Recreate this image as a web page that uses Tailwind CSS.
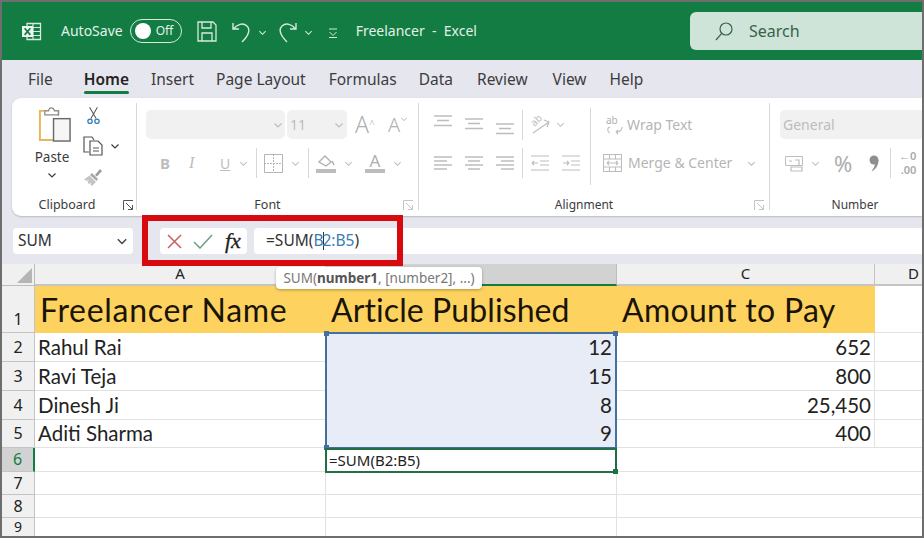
<!DOCTYPE html>
<html lang="en">
<head>
<meta charset="UTF-8">
<title>Freelancer - Excel</title>
<script src="https://cdn.jsdelivr.net/npm/@tailwindcss/browser@4"></script>
</head>
<body class="bg-white">
<svg class="hidden">
  <symbol id="chev" viewBox="0 0 10 10"><path d="M1.5 3.5 5 7l3.5-3.5" fill="none" stroke="currentColor" stroke-width="1.2"/></symbol>
  <symbol id="lines-l" viewBox="0 0 18 16"><path d="M0 2h18M0 6h13M0 10h18M0 14h13" stroke="currentColor" stroke-width="1.5"/></symbol>
  <symbol id="lines-c" viewBox="0 0 18 16"><path d="M0 2h18M3 6h12M0 10h18M3 14h12" stroke="currentColor" stroke-width="1.5"/></symbol>
  <symbol id="lines-r" viewBox="0 0 18 16"><path d="M0 2h18M5 6h13M0 10h18M5 14h13" stroke="currentColor" stroke-width="1.5"/></symbol>
  <symbol id="valign" viewBox="0 0 18 12"><path d="M0 1h18M3 5.500h12M0 10.500h18" stroke="currentColor" stroke-width="1.300"/></symbol>
  <symbol id="launcher" viewBox="0 0 11 11"><path d="M.5 10V.5H10M3 3l6.500 6.500M9.500 5v4.500H5" fill="none" stroke="currentColor" stroke-width="1"/></symbol>
</svg>

<div class="relative w-[924px] h-[538px] overflow-hidden flex flex-col border-2 border-[#6e6e6e] bg-[#e6e6ef] font-['Noto_Sans','Open_Sans',sans-serif]">

  <!-- title bar -->
  <header class="h-[58px] shrink-0 bg-[#127c43] flex items-start text-[#e4f1e9] text-[14px]">
    <svg class="ml-[19px] mt-[19px] w-[21px] h-[21px]" viewBox="0 0 21 21">
      <path d="M6 2.500h13.500v16H6z" fill="none" stroke="#d6eadd" stroke-width="1.300"/>
      <path d="M12 2.500v16M12 6.500h7.500M12 10.500h7.500M12 14.500h7.500" stroke="#d6eadd" stroke-width="1.200"/>
      <rect x="1" y="5" width="11" height="11" fill="#eef6f0"/>
      <path d="M3.600 7.300l5.800 6.600M9.400 7.300l-5.800 6.600" stroke="#127c43" stroke-width="1.700"/>
    </svg>
    <span class="ml-[19px] mt-[19px] leading-[20px]">AutoSave</span>
    <div class="ml-[7px] mt-[17px] w-[52px] h-[24px] rounded-full border border-[#d6eadd] flex items-center pl-[4px]">
      <span class="w-[16px] h-[16px] rounded-full bg-white"></span>
      <span class="ml-[5px] text-[12px] leading-none">Off</span>
    </div>
    <svg class="ml-[15px] mt-[19px] w-[20px] h-[21px]" viewBox="0 0 20 21" fill="none" stroke="#d6eadd" stroke-width="1.300">
      <path d="M1 1h15l3 3v16H1zM5 1v6h9V1M5 20v-8h10v8"/>
    </svg>
    <svg class="ml-[15px] mt-[19px] w-[19px] h-[22px]" viewBox="0 0 19 22" fill="none" stroke="#d6eadd" stroke-width="1.400">
      <path d="M1 2v6h6M1.500 8C5 3 11 1.500 15 5c3.500 3.500 2 9-5 16"/>
    </svg>
    <svg class="ml-[7px] mt-[26px] w-[9px] h-[9px] text-[#d6eadd]"><use href="#chev"/></svg>
    <svg class="ml-[11px] mt-[19px] w-[19px] h-[22px]" viewBox="0 0 19 22" fill="none" stroke="#d6eadd" stroke-width="1.400">
      <path d="M18 2v6h-6M17.500 8C14 3 8 1.500 4 5c-3.500 3.500-2 9 5 16"/>
    </svg>
    <svg class="ml-[7px] mt-[26px] w-[9px] h-[9px] text-[#d6eadd]"><use href="#chev"/></svg>
    <svg class="ml-[15px] mt-[26px] w-[10px] h-[10px]" viewBox="0 0 10 10" fill="none" stroke="#d6eadd" stroke-width="1">
      <path d="M1 1h8M1.500 4 5 7.500 8.500 4M1 9.500h8"/>
    </svg>
    <span class="ml-[18px] mt-[20px] leading-[18px] whitespace-pre">Freelancer  -  Excel</span>
    <div class="ml-auto mt-[10px] w-[232px] h-[38px] rounded-l-[6px] bg-[#cfe4d8] flex items-center text-[#35624a]">
      <svg class="ml-[25px] w-[18px] h-[19px]" viewBox="0 0 18 19" fill="none" stroke="#35624a" stroke-width="1.200">
        <circle cx="11" cy="7" r="6"/><path d="M6.700 11.300 1 18"/>
      </svg>
      <span class="ml-[16px] text-[16px]">Search</span>
    </div>
  </header>

  <!-- tabs -->
  <nav class="h-[38px] shrink-0 flex items-start text-[15.500px] text-[#3c3c3c] leading-[20px]">
    <span class="ml-[26px] mt-[9px]">File</span>
    <span class="ml-[31px] mt-[9px] relative font-semibold text-[#242424]">Home
      <span class="absolute left-0 right-0 top-[22px] h-[3px] rounded-full bg-[#127c43]"></span>
    </span>
    <span class="ml-[22px] mt-[9px]">Insert</span>
    <span class="ml-[22px] mt-[9px]">Page Layout</span>
    <span class="ml-[23px] mt-[9px]">Formulas</span>
    <span class="ml-[22px] mt-[9px]">Data</span>
    <span class="ml-[24px] mt-[9px]">Review</span>
    <span class="ml-[25px] mt-[9px]">View</span>
    <span class="ml-[23px] mt-[9px]">Help</span>
  </nav>

  <!-- ribbon -->
  <section class="ml-[10px] h-[118px] shrink-0 bg-white rounded-l-[9px] flex text-[12px] text-[#3c3c3c] shadow-[0_1px_2px_rgba(0,0,0,0.2)]">

    <!-- clipboard -->
    <div class="w-[125px] shrink-0 border-r border-[#d8d8d8] mt-[5px] mb-[6px] flex flex-col">
      <div class="flex h-[90px] pt-[3px]">
        <div class="ml-[22px] w-[36px] flex flex-col items-center">
          <svg class="ml-[4px] w-[35px] h-[37px] shrink-0" viewBox="0 0 36 38" fill="none">
            <path d="M12 5H3v30h20" stroke="#e8b55c" stroke-width="2"/>
            <path d="M17 5h5v5" stroke="#e8b55c" stroke-width="2"/>
            <path d="M8 9V5h4c0-4 5-4 6 0h4v4z" fill="#fff" stroke="#8a8a8a" stroke-width="1.300"/>
            <rect x="17" y="13" width="17" height="23" fill="#f6f6f6" stroke="#6a6a6a" stroke-width="1.500"/>
          </svg>
          <span class="mt-[5px] text-[13.500px] leading-[18px]">Paste</span>
          <svg class="mt-[4px] w-[10px] h-[10px]"><use href="#chev"/></svg>
        </div>
        <div class="ml-[13px] flex flex-col">
          <svg class="ml-[4px] w-[13px] h-[20px]" viewBox="0 0 15 20" fill="none">
            <path d="M3 0l7.500 13M12 0 4.500 13" stroke="#555" stroke-width="1.200"/>
            <circle cx="3.500" cy="16" r="2.500" stroke="#2f7fb8" stroke-width="1.500"/>
            <circle cx="11.500" cy="16" r="2.500" stroke="#2f7fb8" stroke-width="1.500"/>
          </svg>
          <div class="mt-[10px] flex items-center">
            <svg class="w-[20px] h-[20px]" viewBox="0 0 20 20" fill="none" stroke="#555" stroke-width="1.200">
              <path d="M6 16H1V1h8l2 3"/><path d="M7 5h8l4 4v10H7zM10 12h6M10 15h6"/>
            </svg>
            <svg class="ml-[7px] w-[10px] h-[10px]"><use href="#chev"/></svg>
          </div>
          <svg class="mt-[11px] w-[20px] h-[20px]" viewBox="0 0 20 20" fill="none">
            <path d="M12 8l5-6 2 2-5 5.500z" fill="#9c9c9c"/>
            <path d="M9 6l6 6-1.500 2L7 8z" fill="#a8a8a8"/>
            <path d="M6.500 8.500 13 15l-4 4-1.500-1.500 1-2-2.500 1.500-1.500-1.500 1.500-2.500-2 1L1 12.500z" fill="#c4c4c4"/>
          </svg>
        </div>
      </div>
      <div class="relative mt-auto -mb-[4px] text-center pr-[14px] leading-[18px] text-[12.500px]">Clipboard
        <svg class="absolute right-[2px] top-[4px] w-[11px] h-[11px] text-[#555]"><use href="#launcher"/></svg>
      </div>
    </div>

    <!-- font -->
    <div class="w-[282px] shrink-0 border-r border-[#d8d8d8] mt-[5px] mb-[6px] flex flex-col text-[#bdbdbd]">
      <div class="flex items-center h-[29px] mt-[7px] pl-[9px]">
        <div class="w-[139px] h-[29px] rounded-[5px] bg-[#f1f1f1] flex items-center justify-end pr-[2px]"><svg class="w-[10px] h-[10px]"><use href="#chev"/></svg></div>
        <div class="ml-[2px] w-[60px] h-[29px] rounded-[5px] bg-[#f1f1f1] flex items-center pl-[3px] text-[14px]">11<svg class="ml-auto mr-[3px] w-[10px] h-[10px]"><use href="#chev"/></svg></div>
        <span class="ml-[8px] w-[33px] text-[23px] leading-none text-[#b0b0b0] font-light">A<sup class="text-[10px]">^</sup></span>
        <span class="w-[24px] text-[20px] leading-none text-[#b0b0b0] font-light">A<svg class="inline w-[8px] h-[8px] align-top"><use href="#chev"/></svg></span>
      </div>
      <div class="flex items-center h-[30px] mt-[9px] pl-[23px]">
        <span class="w-[29px] font-bold text-[15px]">B</span>
        <span class="w-[31px] italic text-[16px] font-['Liberation_Serif',serif]">I</span>
        <span class="w-[18px] underline text-[14px]">U</span>
        <svg class="ml-[1px] w-[9px] h-[9px]"><use href="#chev"/></svg>
        <span class="ml-[8px] w-px h-[30px] bg-[#d8d8d8]"></span>
        <svg class="ml-[7px] w-[19px] h-[19px]" viewBox="0 0 19 19" fill="none" stroke="#b5b5b5"><path d="M.5.500h18v18H.500z"/><path d="M9.500 0v19M0 9.500h19" stroke-dasharray="2 1"/></svg>
        <svg class="ml-[8px] w-[9px] h-[9px]"><use href="#chev"/></svg>
        <span class="ml-[8px] w-px h-[30px] bg-[#d8d8d8]"></span>
        <svg class="ml-[7px] w-[20px] h-[20px]" viewBox="0 0 20 20" fill="none"><path d="M3 9l6-6 6 6-5 4z" stroke="#b0b0b0" stroke-width="1.300"/><path d="M16 8l2 4" stroke="#b0b0b0" stroke-width="1.500"/><rect y="16" width="20" height="4" fill="#bdbdbd"/></svg>
        <svg class="ml-[8px] w-[9px] h-[9px]"><use href="#chev"/></svg>
        <span class="ml-[12px] w-[20px] h-[20px] flex flex-col items-center text-[#b0b0b0]"><span class="text-[17px] leading-[16px]">A</span><span class="w-[20px] h-[4px] bg-[#bdbdbd]"></span></span>
        <svg class="ml-[8px] w-[9px] h-[9px]"><use href="#chev"/></svg>
      </div>
      <div class="relative mt-auto -mb-[4px] text-center text-[#3c3c3c] pr-[20px] leading-[18px] text-[12.500px]">Font
        <svg class="absolute right-[4px] top-[4px] w-[11px] h-[11px] text-[#c4c4c4]"><use href="#launcher"/></svg>
      </div>
    </div>

    <!-- alignment -->
    <div class="w-[351px] shrink-0 border-r border-[#d8d8d8] mt-[5px] mb-[6px] flex flex-col text-[#bdbdbd]">
      <div class="flex h-[77px] mt-[5px]">
        <div class="w-[172px] flex flex-col pl-[15px] border-r border-[#d8d8d8]">
          <div class="flex items-start h-[30px] mt-[2px]">
            <svg class="mt-[5px] w-[18px] h-[12px]"><use href="#valign"/></svg>
            <svg class="ml-[13px] mt-[8px] w-[18px] h-[12px]"><use href="#valign"/></svg>
            <svg class="ml-[13px] mt-[13px] w-[18px] h-[12px]"><use href="#valign"/></svg>
            <span class="ml-[8px] w-px h-[30px] bg-[#d8d8d8]"></span>
            <div class="relative ml-[6px] mt-[3px] w-[21px] h-[21px]">
              <svg class="w-[21px] h-[21px]" viewBox="0 0 21 21" fill="none" stroke="#bdbdbd" stroke-width="1.200"><path d="M4 20 20 9M15 7l5 2-2 5"/></svg>
              <span class="absolute left-[1px] top-[1px] -rotate-45 text-[10px] leading-[12px]">ab</span>
            </div>
            <svg class="ml-[6px] mt-[10px] w-[9px] h-[9px]"><use href="#chev"/></svg>
          </div>
          <div class="flex items-start h-[30px] mt-[8px]">
            <svg class="w-[18px] h-[16px] mt-[7px]"><use href="#lines-l"/></svg>
            <svg class="ml-[13px] mt-[7px] w-[18px] h-[16px]"><use href="#lines-c"/></svg>
            <svg class="ml-[13px] mt-[7px] w-[18px] h-[16px]"><use href="#lines-r"/></svg>
            <span class="ml-[8px] w-px h-[30px] bg-[#d8d8d8]"></span>
            <svg class="ml-[8px] mt-[7px] w-[18px] h-[16px]" viewBox="0 0 18 16"><path d="M0 1h18M9 6h9M9 10h9M0 15h18M1 8h6M1 8l2-2M1 8l2 2" fill="none" stroke="currentColor" stroke-width="1.200"/></svg>
            <svg class="ml-[13px] mt-[7px] w-[18px] h-[16px]" viewBox="0 0 18 16"><path d="M0 1h18M9 6h9M9 10h9M0 15h18M7 8H1M7 8 5 6M7 8l-2 2" fill="none" stroke="currentColor" stroke-width="1.200"/></svg>
          </div>
        </div>
        <div class="flex flex-col text-[14px] text-[#b5b5b5] whitespace-nowrap">
          <div class="flex items-center h-[30px] mt-[2px] pl-[14px]">
            <div class="relative w-[19px] h-[20px]">
              <span class="absolute left-[1px] -top-[1px] text-[10px] leading-[12px] text-[#b0b0b0]">ab</span>
              <svg class="w-[19px] h-[20px]" viewBox="0 0 19 20" fill="none" stroke="#bdbdbd" stroke-width="1.100"><path d="M5 12c-3 .500-3 5 0 6M17 12c0 3-2 5-6 5M11 17l2-2M11 17l2 2"/></svg>
            </div>
            <span class="ml-[3px] leading-[20px]">Wrap Text</span>
          </div>
          <div class="flex items-center h-[30px] mt-[8px] pl-[12px]">
            <svg class="w-[19px] h-[18px]" viewBox="0 0 19 18" fill="none" stroke="#bdbdbd" stroke-width="1.100">
              <path d="M.5.500h18v17H.500zM.5 5h18M.5 13h18M6.500.500V5M12.500.500V5M6.500 13v4.500M12.500 13v4.500M4 9h11M4 9l2-2M4 9l2 2M15 9l-2-2M15 9l-2 2"/>
            </svg>
            <span class="ml-[6px] leading-[20px]">Merge &amp; Center</span>
            <svg class="ml-[15px] w-[9px] h-[9px]"><use href="#chev"/></svg>
          </div>
        </div>
      </div>
      <div class="relative mt-auto -mb-[4px] text-center text-[#3c3c3c] pr-[20px] leading-[18px] text-[12px]">Alignment
        <svg class="absolute right-[4px] top-[4px] w-[11px] h-[11px] text-[#c4c4c4]"><use href="#launcher"/></svg>
      </div>
    </div>

    <!-- number -->
    <div class="flex-1 min-w-0 mt-[5px] mb-[6px] flex flex-col text-[#bdbdbd]">
      <div class="ml-[10px] mt-[7px] h-[29px] rounded-l-[5px] bg-[#f1f1f1] flex items-center pl-[3px] text-[14px]">General</div>
      <div class="flex items-center h-[30px] mt-[9px] pl-[15px]">
        <svg class="w-[18px] h-[17px]" viewBox="0 0 18 17" fill="none" stroke="#bdbdbd"><path d="M.5 1.500h17v9H.500z"/><path d="M4 6h3M10 5h4v5M6 12h11v4H6z" stroke-width="1.200"/></svg>
        <svg class="ml-[8px] w-[9px] h-[9px]"><use href="#chev"/></svg>
        <span class="ml-[14px] w-[35px] text-[22px] leading-none text-[#adadad]">%</span>
        <svg class="w-[10px] h-[17px] mr-[11px]" viewBox="0 0 10 17"><circle cx="5" cy="5" r="4.500" fill="#8f8f8f"/><path d="M9.500 5c0 5-2.500 9.500-7 11.500C5 13 6 11 6 8z" fill="#8f8f8f"/></svg>
        <span class="w-px h-[30px] bg-[#d8d8d8]"></span>
        <span class="ml-[8px] text-[11px] leading-[14px] text-[#aaaaaa] text-right font-semibold">&#8592;0<br>.00</span>
      </div>
      <div class="mt-auto -mb-[4px] pl-[18px] text-center text-[#3c3c3c] leading-[18px] text-[12px]">Number</div>
    </div>
  </section>

  <!-- formula bar -->
  <div class="h-[48px] shrink-0 flex items-start pt-[12px] pl-[11px] text-[#333]">
    <div class="w-[120px] h-[26px] rounded-[4px] bg-white flex items-center pl-[5px] text-[15.500px]">SUM
      <svg class="ml-auto mr-[5px] w-[12px] h-[12px] text-[#444]"><use href="#chev"/></svg>
    </div>
    <div class="ml-[27px] w-[87px] h-[26px] rounded-[4px] bg-white flex items-center pl-[7px]">
      <svg class="w-[15px] h-[15px]" viewBox="0 0 15 15"><path d="M1 1l13 13M14 1 1 14" stroke="#c9605f" stroke-width="1.500"/></svg>
      <svg class="ml-[11px] w-[20px] h-[15px]" viewBox="0 0 20 15" fill="none"><path d="M1 8l6 6L19 1" stroke="#6f9f7e" stroke-width="1.500"/></svg>
      <span class="ml-[12px] italic text-[22px] leading-none text-[#222] [-webkit-text-stroke:0.3px_#222] font-['Liberation_Serif',serif]">fx</span>
    </div>
    <div class="ml-[7px] flex-1 h-[26px] rounded-l-[4px] bg-white flex items-center pl-[12px] text-[15.500px] whitespace-pre">=SUM(<span class="text-[#3a7db3]">B</span><span class="inline-block w-px h-[18px] bg-[#333] -mx-px"></span><span class="text-[#3a7db3]">2:B5</span>)</div>
  </div>

  <!-- sheet -->
  <div class="flex-1 min-h-0 bg-white grid grid-cols-[33px_291px_291px_258px_1fr] grid-rows-[22px_47px_29px_29px_29px_28px_24px_23px_23px_18px] font-['Lato','Noto_Sans',sans-serif] text-[20.500px] text-[#222]">
    <div class="bg-[#f0f0f0] border-r border-b border-[#bdbdbd] flex items-end justify-end p-[2px]"><span class="w-[15px] h-[15px] bg-[#b5b5b5] [clip-path:polygon(100%_0,100%_100%,0_100%)]"></span></div>
    <div class="bg-[#f0f0f0] border-r border-b-2 border-[#c4c4c4] text-center text-[15px] leading-[19px] font-['Noto_Sans',sans-serif]">A</div>
    <div class="bg-[#d2d2d2] border-r border-b-2 border-b-[#127c43] border-r-[#bdbdbd]"></div>
    <div class="bg-[#f0f0f0] border-r border-b-2 border-[#c4c4c4] text-center text-[15px] leading-[19px] font-['Noto_Sans',sans-serif]">C</div>
    <div class="bg-[#f0f0f0] border-b-2 border-[#c4c4c4] pl-[33px] text-[15px] leading-[19px] font-['Noto_Sans',sans-serif]">D</div>

    <div class="bg-[#f0f0f0] border-r border-b border-[#c4c4c4] flex items-end justify-center pb-[1px] text-[16px] font-['Noto_Sans',sans-serif]">1</div>
    <div class="bg-[#fdd25e] pl-[5px] text-[32px] tracking-[0.7px] leading-[47px] text-[#1a1408]">Freelancer Name</div>
    <div class="bg-[#fdd25e] pl-[5px] text-[32px] tracking-[0.1px] leading-[47px] text-[#1a1408]">Article Published</div>
    <div class="bg-[#fdd25e] pl-[5px] text-[32px] tracking-[0.3px] leading-[47px] text-[#1a1408]">Amount to Pay</div>
    <div class="border-b border-[#e2e2e2]"></div>

    <div class="bg-[#f0f0f0] border-r border-b border-[#c4c4c4] text-center text-[16px] leading-[28px] font-['Noto_Sans',sans-serif]">2</div>
    <div class="border-r border-b border-[#e2e2e2] pl-[3px] leading-[28px]">Rahul Rai</div>
    <div class="bg-[#e8ecf6] text-right pr-[5px] leading-[28px]">12</div>
    <div class="border-r border-b border-[#e2e2e2] text-right pr-[3px] leading-[28px]">652</div>
    <div class="border-b border-[#e2e2e2]"></div>

    <div class="bg-[#f0f0f0] border-r border-b border-[#c4c4c4] text-center text-[16px] leading-[28px] font-['Noto_Sans',sans-serif]">3</div>
    <div class="border-r border-b border-[#e2e2e2] pl-[3px] leading-[28px]">Ravi Teja</div>
    <div class="bg-[#e8ecf6] text-right pr-[5px] leading-[28px]">15</div>
    <div class="border-r border-b border-[#e2e2e2] text-right pr-[3px] leading-[28px]">800</div>
    <div class="border-b border-[#e2e2e2]"></div>

    <div class="bg-[#f0f0f0] border-r border-b border-[#c4c4c4] text-center text-[16px] leading-[28px] font-['Noto_Sans',sans-serif]">4</div>
    <div class="border-r border-b border-[#e2e2e2] pl-[3px] leading-[28px]">Dinesh Ji</div>
    <div class="bg-[#e8ecf6] text-right pr-[5px] leading-[28px]">8</div>
    <div class="border-r border-b border-[#e2e2e2] text-right pr-[3px] leading-[28px]">25,450</div>
    <div class="border-b border-[#e2e2e2]"></div>

    <div class="bg-[#f0f0f0] border-r border-b border-[#c4c4c4] text-center text-[16px] leading-[27px] font-['Noto_Sans',sans-serif]">5</div>
    <div class="border-r border-b border-[#e2e2e2] pl-[3px] leading-[27px]">Aditi Sharma</div>
    <div class="bg-[#e8ecf6] text-right pr-[5px] leading-[27px]">9</div>
    <div class="border-r border-b border-[#e2e2e2] text-right pr-[3px] leading-[27px]">400</div>
    <div class="border-b border-[#e2e2e2]"></div>

    <div class="bg-[#d2d2d2] border-r-2 border-b border-r-[#127c43] border-b-[#c4c4c4] text-center text-[16px] leading-[23px] text-[#127c43] font-['Noto_Sans',sans-serif]">6</div>
    <div class="border-r border-b border-[#e2e2e2]"></div>
    <div class="pl-[3px] pt-[1px] text-[15px] leading-[22px] font-['Noto_Sans',sans-serif]">=SUM(B2:B5)</div>
    <div class="border-b border-[#e2e2e2]"></div>
    <div class="border-b border-[#e2e2e2]"></div>

    <div class="bg-[#f0f0f0] border-r border-b border-[#c4c4c4] text-center text-[16px] leading-[22px] font-['Noto_Sans',sans-serif]">7</div>
    <div class="border-r border-b border-[#e2e2e2]"></div>
    <div class="border-r border-b border-[#e2e2e2]"></div>
    <div class="border-b border-[#e2e2e2]"></div>
    <div class="border-b border-[#e2e2e2]"></div>

    <div class="bg-[#f0f0f0] border-r border-b border-[#c4c4c4] text-center text-[16px] leading-[22px] font-['Noto_Sans',sans-serif]">8</div>
    <div class="border-r border-b border-[#e2e2e2]"></div>
    <div class="border-r border-b border-[#e2e2e2]"></div>
    <div class="border-b border-[#e2e2e2]"></div>
    <div class="border-b border-[#e2e2e2]"></div>

    <div class="bg-[#f0f0f0] border-r border-[#c4c4c4] text-center text-[14px] leading-[18px] font-['Noto_Sans',sans-serif]">9</div>
    <div class="border-r border-[#e2e2e2]"></div>
    <div class="border-r border-[#e2e2e2]"></div>
    <div></div>
    <div></div>
  </div>

  <!-- overlays -->
  <div class="absolute left-[140px] top-[213px] w-[261px] h-[51px] border-[6px] border-[#d90a0f]"></div>
  <div class="absolute left-[274px] top-[265px] w-[206px] h-[22px] rounded-[4px] bg-white shadow-[0_1px_3px_rgba(0,0,0,0.3)] flex items-center justify-center text-[13.500px] text-[#777] whitespace-pre">SUM(<b class="text-[#555]">number1</b>, [number2], ...)</div>
  <div class="absolute left-[323px] top-[330px] w-[292px] h-[117px] border-2 border-[#41719c]">
    <span class="absolute -left-[3px] -top-[3px] w-[5px] h-[5px] bg-[#41719c]"></span>
    <span class="absolute -right-[3px] -top-[3px] w-[5px] h-[5px] bg-[#41719c]"></span>
    <span class="absolute -left-[3px] -bottom-[3px] w-[5px] h-[5px] bg-[#41719c]"></span>
  </div>
  <div class="absolute left-[323px] top-[446px] w-[292px] h-[25px] border-2 border-[#216e47]">
    <span class="absolute -right-[3px] -bottom-[3px] w-[5px] h-[5px] bg-[#216e47]"></span>
  </div>
</div>
</body>
</html>
